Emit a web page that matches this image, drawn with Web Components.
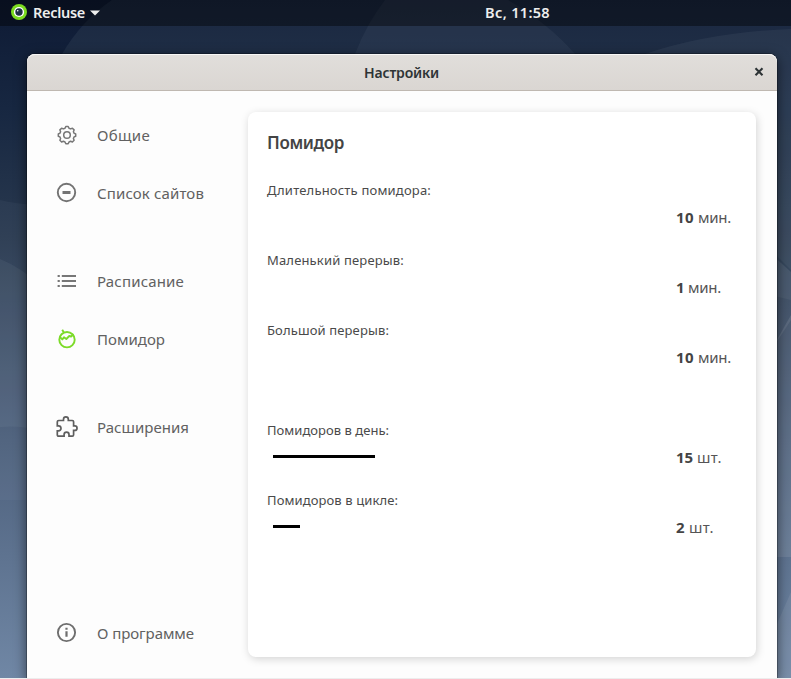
<!DOCTYPE html>
<html lang="ru">
<head>
<meta charset="utf-8">
<title>Настройки</title>
<style>
html,body{margin:0;height:100%;overflow:hidden}
body{font-family:"Noto Sans","Open Sans",sans-serif}
</style>
</head>
<body>
<recluse-desktop></recluse-desktop>
<script>
function define(name, html, setup) {
  customElements.define(name, class extends HTMLElement {
    constructor() {
      super();
      this.attachShadow({ mode: 'open' }).innerHTML = html;
    }
    connectedCallback() { if (setup) setup.call(this, this.shadowRoot); }
  });
}

// Text run whose tracking is adjusted so it spans the width given in pixels.
define('fit-text', `<style>:host{display:inline-block;white-space:pre}span{display:inline-block}</style><span><slot></slot></span>`,
  function (root) {
    const target = Number(this.getAttribute('width'));
    const span = root.querySelector('span');
    const natural = span.getBoundingClientRect().width;
    const count = this.textContent.length;
    if (natural && target) span.style.letterSpacing = ((target - natural) / count) + 'px';
  });

const icons = {
  gear: `<g stroke="#777" stroke-width="1.5"><circle cx="12" cy="12" r="3.3"/><path stroke-linejoin="round" d="M10 5.200 10.800 3.500h2.400L14 5.200l1.600.7 1.800-.7 1.700 1.700-.7 1.800.7 1.500 1.600.7v2.300l-1.600.7-.7 1.600.7 1.800-1.700 1.700-1.800-.7-1.600.7-.8 1.700h-2.400l-.8-1.700-1.600-.7-1.800.7-1.700-1.700.7-1.800-.7-1.600-1.600-.7v-2.300l1.600-.7.7-1.500-.7-1.800 1.700-1.700 1.800.7z"/></g>`,
  minus: `<g stroke="#737373"><circle cx="11.500" cy="11.500" r="8.700" stroke-width="1.900"/><path d="M7.500 11.500h8" stroke-width="3"/></g>`,
  list: `<g stroke="#777" stroke-width="2.100"><path d="M6.800 7h14.200M6.800 12h14.200M6.800 17h14.200M2.600 7h2.200M2.600 12h2.200M2.600 17h2.200"/></g>`,
  tomato: `<g stroke="#7cdb29" stroke-width="1.900"><circle cx="12" cy="12.700" r="7.700"/><path d="M7.200 2.800 8.900 5.600M4.800 10l2.500 2.400 1.700-2.100 2.300 1.700 3-3 1.800.5 2.400-2.200" stroke-linejoin="round"/></g>`,
  puzzle: `<path stroke="#5e5e5e" stroke-width="1.700" d="M8.500 5.500V4.300a2.400 2.400 0 0 1 4.800 0V5.500h4q1.300 0 1.300 1.300v4.100h1.200a2.250 2.250 0 0 1 0 4.500h-1.200v4.400q0 1.400-1.300 1.400H14v-1.600a2.450 2.450 0 0 0-4.900 0v1.600H3.700q-1.400 0-1.400-1.400v-3.900h1.200a2.500 2.500 0 0 0 0-5H2.300V6.800q0-1.300 1.400-1.300z"/>`,
  info: `<g stroke="#6e6e6e"><circle cx="11.500" cy="11.500" r="8.600" stroke-width="1.900"/><path d="M11.500 10.300v5.500M11.500 6.700v2" stroke-width="2.200"/></g>`
};
define('nav-icon', `<style>:host{display:block;width:24px;height:24px}svg{display:block;fill:none}</style><svg width="24" height="24" viewBox="0 0 24 24"></svg>`,
  function (root) { root.querySelector('svg').innerHTML = icons[this.getAttribute('name')]; });

define('nav-item', `<style>
:host{display:flex;align-items:center;height:58px;gap:18px;padding-left:28px;font-size:15px;color:#616161}
.label{line-height:24px;padding-bottom:1px}
</style><slot name="icon"></slot><div class="label"><slot></slot></div>`);

define('side-nav', `<style>
:host{display:flex;flex-direction:column;width:221px;padding:15px 0 16px;box-sizing:border-box}
.gap{margin-top:30px}.end{margin-top:auto}
</style>
<nav-item><nav-icon slot="icon" name="gear"></nav-icon><fit-text width="53">Общие</fit-text></nav-item>
<nav-item><nav-icon slot="icon" name="minus"></nav-icon><fit-text width="107">Список сайтов</fit-text></nav-item>
<nav-item class="gap"><nav-icon slot="icon" name="list"></nav-icon><fit-text width="87">Расписание</fit-text></nav-item>
<nav-item><nav-icon slot="icon" name="tomato"></nav-icon><fit-text width="68">Помидор</fit-text></nav-item>
<nav-item class="gap"><nav-icon slot="icon" name="puzzle"></nav-icon><fit-text width="92">Расширения</fit-text></nav-item>
<nav-item class="end"><nav-icon slot="icon" name="info"></nav-icon><fit-text width="97">О программе</fit-text></nav-item>`);

define('setting-row', `<style>
:host{display:block;height:70px;color:#4a4a4a;font-size:13px}
.label{height:20px;line-height:20px}
.line{display:flex;align-items:center;justify-content:space-between;height:20px;margin-top:7px}
.bar{height:3px;margin:0 0 2px 6px;background:#000}
.value{width:60px;font-size:15px;line-height:20px;color:#555;display:flex}
::slotted([slot=amount]){font-weight:700;color:#444}
</style><div class="label"><slot></slot></div>
<div class="line"><div class="bar"></div><div class="value"><slot name="amount"></slot><slot name="unit"></slot></div></div>`,
  function (root) { root.querySelector('.bar').style.width = (this.getAttribute('bar') || 0) + 'px'; });

define('settings-card', `<style>
:host{display:block;box-sizing:border-box;width:508px;height:545px;margin-top:21px;padding:19px 20px 0 19px;background:#fff;border-radius:8px;box-shadow:1px 2px 8px rgba(0,0,0,.17)}
h1{margin:0 0 25px;height:24px;line-height:24px;font-size:17px;font-weight:650;color:#444}
.space{margin-top:30px}
</style>
<h1><fit-text width="77">Помидор</fit-text></h1>
<setting-row><fit-text width="164">Длительность помидора:</fit-text><fit-text slot="amount" width="22">10 </fit-text><fit-text slot="unit" width="33">мин.</fit-text></setting-row>
<setting-row><fit-text width="137">Маленький перерыв:</fit-text><fit-text slot="amount" width="12">1 </fit-text><fit-text slot="unit" width="33">мин.</fit-text></setting-row>
<setting-row><fit-text width="122">Большой перерыв:</fit-text><fit-text slot="amount" width="22">10 </fit-text><fit-text slot="unit" width="33">мин.</fit-text></setting-row>
<setting-row class="space" bar="102"><fit-text width="122">Помидоров в день:</fit-text><fit-text slot="amount" width="21">15 </fit-text><fit-text slot="unit" width="25">шт.</fit-text></setting-row>
<setting-row bar="27"><fit-text width="131">Помидоров в цикле:</fit-text><fit-text slot="amount" width="13">2 </fit-text><fit-text slot="unit" width="25">шт.</fit-text></setting-row>`);

define('settings-window', `<style>
:host{display:flex;flex-direction:column;margin:28px 14px 0 27px;flex:1;border-radius:8px 8px 0 0;background:#fdfdfd;box-shadow:0 0 0 1px rgba(0,0,0,.24),0 3px 12px 1px rgba(0,0,0,.5)}
header{display:grid;grid-template-columns:36px 1fr 36px;align-items:center;height:37px;box-sizing:border-box;border-bottom:1px solid #bfb8b1;border-radius:8px 8px 0 0;background:linear-gradient(#e1dedb,#dad6d2);box-shadow:inset 0 1px #f8f7f6;color:#2e3436;font-size:14px;font-weight:600;text-align:center}
header div{padding-right:1px}
header svg{display:block;margin-left:13px}
main{display:flex;flex:1}
</style>
<header><span></span><div><fit-text width="75">Настройки</fit-text></div>
<svg width="10" height="10" viewBox="0 0 10 10"><path d="M1.500 1.200l7 7M8.500 1.200l-7 7" stroke="#2e3436" stroke-width="2.100"/></svg></header>
<main><side-nav></side-nav><settings-card></settings-card></main>`);

define('top-bar', `<style>
:host{display:grid;grid-template-columns:1fr auto 1fr;align-items:center;height:26px;background:rgba(0,0,0,.4);color:#eee;font-size:14.500px;font-weight:600;line-height:24px}
.app{display:flex;align-items:center;padding-left:11px}
.app,.clock{height:26px}
.name{margin-left:6px;height:26px}.arrow{margin-left:5px}
.clock{margin-left:244px}
</style>
<div class="app"><svg width="16" height="16" viewBox="0 0 16 16" style="margin-top:-2px"><circle cx="8" cy="8" r="8" fill="#7cdb20"/><circle cx="8" cy="8" r="5.100" fill="#fff"/><circle cx="8" cy="8" r="3.700" fill="#203047"/><circle cx="6.700" cy="6.700" r=".8" fill="#fff"/></svg>
<span class="name"><fit-text width="52">Recluse</fit-text></span>
<svg class="arrow" width="10" height="6" viewBox="0 0 10 6"><path d="M0 .5h10L5 5.500z" fill="#eee"/></svg></div>
<div class="clock"><fit-text width="65">Вс, 11:58</fit-text></div><span></span>`);

define('recluse-desktop', `<style>
:host{display:flex;flex-direction:column;position:relative;isolation:isolate;width:791px;height:679px;overflow:hidden;box-sizing:border-box;border-bottom:1px solid #ededed}
.wallpaper{position:absolute;inset:0;z-index:-1}
</style>
<svg class="wallpaper" width="791" height="678" viewBox="0 0 791 678">
<defs><linearGradient id="sky" x2="0" y2="1"><stop offset="0" stop-color="#0e1a34"/><stop offset=".16" stop-color="#172741"/><stop offset=".35" stop-color="#29394f"/><stop offset=".65" stop-color="#4d607c"/><stop offset="1" stop-color="#7087a5"/></linearGradient></defs>
<rect width="791" height="678" fill="url(#sky)"/>
<path d="M62 54Q82 20 112 0H791V300L62 120Z" fill="#a0b0bb" opacity=".09"/>
<path d="M355 54Q367 23 385 0H508Q548 23 575 54Z" fill="#a0a8bb" opacity=".07"/>
<path d="M645 54Q710 32 791 29V270L640 120Z" fill="#a0b0bb" opacity=".08"/>
<path d="M0 200Q18 205 40 204V500H0Z" fill="#b0bec9" opacity=".06"/>
<path d="M0 259Q20 267 40 285V430Q18 425 0 427Z" fill="#b0bec9" opacity=".08"/>
<path d="M770 253L791 272V320L770 352Z" fill="#c0c8d0" opacity=".12"/>
<path d="M770 352L791 315V557H770Z" fill="#c0c8d0" opacity=".15"/>
<path d="M791 592L770 640V678H791Z" fill="#c0c8d0" opacity=".13"/>
</svg>
<top-bar></top-bar><settings-window></settings-window>`);
</script>
</body>
</html>
